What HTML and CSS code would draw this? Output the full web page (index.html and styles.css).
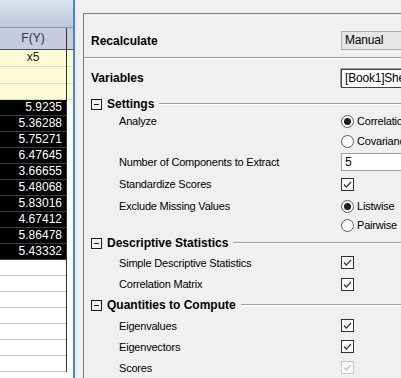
FILE: index.html
```html
<!DOCTYPE html>
<html>
<head>
  <meta charset="UTF-8">
  <title>PCA Settings</title>
  <link rel="stylesheet" href="styles.css">
</head>
<body>

  <div class="app">
    <div class="sheet">
      <div class="sheet-top"></div>
      <div class="grid">
        <div class="col">
          <div class="hdr">F(Y)</div>
          <div class="cell meta center">x5</div>
          <div class="cell meta"></div>
          <div class="cell meta short"></div>
          <div class="cell sel">5.9235</div>
          <div class="cell sel">5.36288</div>
          <div class="cell sel">5.75271</div>
          <div class="cell sel">6.47645</div>
          <div class="cell sel">3.66655</div>
          <div class="cell sel">5.48068</div>
          <div class="cell sel">5.83016</div>
          <div class="cell sel">4.67412</div>
          <div class="cell sel">5.86478</div>
          <div class="cell sel">5.43332</div>
          <div class="cell"></div>
          <div class="cell"></div>
          <div class="cell"></div>
          <div class="cell"></div>
          <div class="cell"></div>
          <div class="cell"></div>
          <div class="cell"></div>
        </div>
        <div class="col stub">
          <div class="hdr"></div>
          <div class="cell meta"></div>
          <div class="cell meta"></div>
          <div class="cell meta short"></div>
        </div>
      </div>
    </div>

    <div class="edge"></div>

    <div class="dialog">
      <div class="panel">

        <div class="row top-row">
          <span class="label main">Recalculate</span>
          <div class="combo">Manual</div>
        </div>
        <div class="sep"></div>

        <div class="row var-row">
          <span class="label main">Variables</span>
          <div class="textbox dark">[Book1]Sheet1!F(Y)</div>
        </div>

        <div class="group first">
          <span class="toggle"></span>
          <span class="group-title">Settings</span>
          <span class="group-line"></span>
        </div>

        <div class="row multi">
          <span class="label">Analyze</span>
          <div class="options">
            <div class="option"><span class="radio on"></span>Correlation Matrix</div>
            <div class="option"><span class="radio"></span>Covariance Matrix</div>
          </div>
        </div>
        <div class="row">
          <span class="label">Number of Components to Extract</span>
          <div class="textbox small">5</div>
        </div>
        <div class="row tall">
          <span class="label">Standardize Scores</span>
          <span class="check">
            <svg width="13" height="13" viewBox="0 0 13 13"><path d="M3 6.5 L5.3 9 L10 4" fill="none" stroke="#3a3a3a" stroke-width="1.2"/></svg>
          </span>
        </div>
        <div class="row multi tight">
          <span class="label">Exclude Missing Values</span>
          <div class="options">
            <div class="option"><span class="radio on"></span>Listwise</div>
            <div class="option"><span class="radio"></span>Pairwise</div>
          </div>
        </div>

        <div class="group">
          <span class="toggle"></span>
          <span class="group-title">Descriptive Statistics</span>
          <span class="group-line"></span>
        </div>

        <div class="row">
          <span class="label">Simple Descriptive Statistics</span>
          <span class="check">
            <svg width="13" height="13" viewBox="0 0 13 13"><path d="M3 6.5 L5.3 9 L10 4" fill="none" stroke="#3a3a3a" stroke-width="1.2"/></svg>
          </span>
        </div>
        <div class="row wide">
          <span class="label">Correlation Matrix</span>
          <span class="check">
            <svg width="13" height="13" viewBox="0 0 13 13"><path d="M3 6.5 L5.3 9 L10 4" fill="none" stroke="#3a3a3a" stroke-width="1.2"/></svg>
          </span>
        </div>

        <div class="group last">
          <span class="toggle"></span>
          <span class="group-title">Quantities to Compute</span>
          <span class="group-line"></span>
        </div>

        <div class="row">
          <span class="label">Eigenvalues</span>
          <span class="check">
            <svg width="13" height="13" viewBox="0 0 13 13"><path d="M3 6.5 L5.3 9 L10 4" fill="none" stroke="#3a3a3a" stroke-width="1.2"/></svg>
          </span>
        </div>
        <div class="row">
          <span class="label">Eigenvectors</span>
          <span class="check">
            <svg width="13" height="13" viewBox="0 0 13 13"><path d="M3 6.5 L5.3 9 L10 4" fill="none" stroke="#3a3a3a" stroke-width="1.2"/></svg>
          </span>
        </div>
        <div class="row">
          <span class="label">Scores</span>
          <span class="check disabled">
            <svg width="13" height="13" viewBox="0 0 13 13"><path d="M3 6.5 L5.3 9 L10 4" fill="none" stroke="#c4c4c4" stroke-width="1.2"/></svg>
          </span>
        </div>

      </div>
    </div>
  </div>

</body>
</html>
```

FILE: styles.css
```css
html, body {
  margin: 0;
  padding: 0;
  width: 100%;
  height: 100%;
  overflow: hidden;
  font-family: "Liberation Sans", Arial, sans-serif;
  background: #f0f0f0;
}

.app {
  display: flex;
  height: 378px;
}

/* worksheet on the left */
.sheet {
  width: 73px;
  flex-shrink: 0;
  background: #fff;
}
.sheet-top {
  height: 28px;
  background: linear-gradient(#dbe3ed, #bccadb);
  border-bottom: 1px solid #8f9bb0;
  box-sizing: border-box;
}
.grid {
  display: flex;
}
.col {
  width: 67px;
  border-right: 1px solid #303030;
  box-sizing: border-box;
}
.col.stub {
  width: 6px;
  border-right: none;
}
.hdr {
  height: 22px;
  line-height: 21px;
  background: #c7cbdf;
  border-bottom: 1px solid #4a4e60;
  box-sizing: border-box;
  text-align: center;
  font-size: 12px;
  color: #333;
}
.cell {
  height: 16px;
  line-height: 15px;
  border-bottom: 1px solid #c4c4c4;
  box-sizing: border-box;
  font-size: 12px;
  text-align: right;
  padding-right: 4px;
}
.cell.meta {
  height: 17px;
  background: #fffbd6;
  border-bottom-color: #e2ddb4;
}
.cell.meta.short {
  height: 16px;
}
.cell.center {
  text-align: center;
  padding-right: 0;
  color: #222;
}
.cell.sel {
  background: #000;
  color: #fff;
  border-bottom-color: #3c3c3c;
}

.edge {
  width: 4px;
  flex-shrink: 0;
  background: linear-gradient(to right, #4b86c4 0, #4b86c4 2px, #e9eef4 2px);
}

/* settings dialog */
.dialog {
  flex: 1;
  padding: 13px 0 0 6px;
  min-width: 0;
}
.panel {
  width: 420px;
  border-top: 1px solid #7c7c7c;
  border-left: 1px solid #7c7c7c;
  font-size: 11px;
  letter-spacing: -0.2px;
  color: #000;
}

.row {
  display: grid;
  grid-template-columns: 257px 1fr;
  align-items: center;
  height: 21px;
}
.row.tall {
  height: 24px;
}
.row.wide {
  height: 22px;
}
.row.multi {
  height: 40px;
  align-items: start;
}
.row.multi.tight {
  height: 38px;
}
.row.multi .label {
  line-height: 20px;
}
.row.top-row {
  height: 33px;
  padding-top: 10px;
}
.row.var-row {
  height: 38px;
}

.label {
  padding-left: 35px;
  white-space: nowrap;
}
.label.main {
  padding-left: 7px;
  font-weight: bold;
  font-size: 12px;
  letter-spacing: 0;
}

.sep {
  height: 2px;
  border-top: 1px solid #a0a0a0;
  border-bottom: 1px solid #fff;
  box-sizing: border-box;
}

.group {
  display: flex;
  align-items: center;
  height: 18px;
  padding-left: 7px;
}
.group.first {
  height: 14px;
}
.group.last {
  height: 20px;
}
.toggle {
  position: relative;
  width: 11px;
  height: 11px;
  border: 1px solid #1a1a1a;
  box-sizing: border-box;
  flex-shrink: 0;
}
.toggle::after {
  content: "";
  position: absolute;
  left: 2px;
  right: 2px;
  top: 4px;
  height: 1px;
  background: #1a1a1a;
}
.group-title {
  margin-left: 5px;
  font-weight: bold;
  font-size: 12px;
  letter-spacing: 0;
  white-space: nowrap;
}
.group-line {
  flex: 1;
  height: 2px;
  margin-left: 5px;
  border-top: 1px solid #a0a0a0;
  border-bottom: 1px solid #fff;
  box-sizing: border-box;
}

.combo, .textbox {
  height: 19px;
  line-height: 17px;
  width: 100px;
  box-sizing: border-box;
  padding-left: 3px;
  white-space: nowrap;
  overflow: hidden;
}
.combo {
  background: #e6e6e6;
  border: 1px solid #adadad;
  font-size: 12px;
}
.textbox {
  background: #fff;
  border: 1px solid #a0a0a0;
  font-size: 12px;
}
.textbox.dark {
  border-color: #404040;
  box-shadow: -1px -1px 0 #a0a0a0;
}
.textbox.small {
  height: 18px;
  line-height: 16px;
}

.options {
  display: flex;
  flex-direction: column;
}
.option {
  display: flex;
  align-items: center;
  height: 20px;
  white-space: nowrap;
}
.row.multi.tight .option + .option {
  height: 18px;
}
.radio {
  position: relative;
  width: 13px;
  height: 13px;
  border: 1px solid #5a5a5a;
  border-radius: 50%;
  background: #fff;
  box-sizing: border-box;
  margin-right: 3px;
  flex-shrink: 0;
}
.radio.on::after {
  content: "";
  position: absolute;
  left: 2px;
  top: 2px;
  width: 7px;
  height: 7px;
  border-radius: 50%;
  background: #1e1e1e;
}

.check {
  width: 13px;
  height: 13px;
  border: 1px solid #333;
  background: #fafafa;
  box-sizing: border-box;
  display: flex;
  align-items: center;
  justify-content: center;
}
.check svg {
  display: block;
  flex-shrink: 0;
}
.check.disabled {
  border-color: #c8c8c8;
}
```
